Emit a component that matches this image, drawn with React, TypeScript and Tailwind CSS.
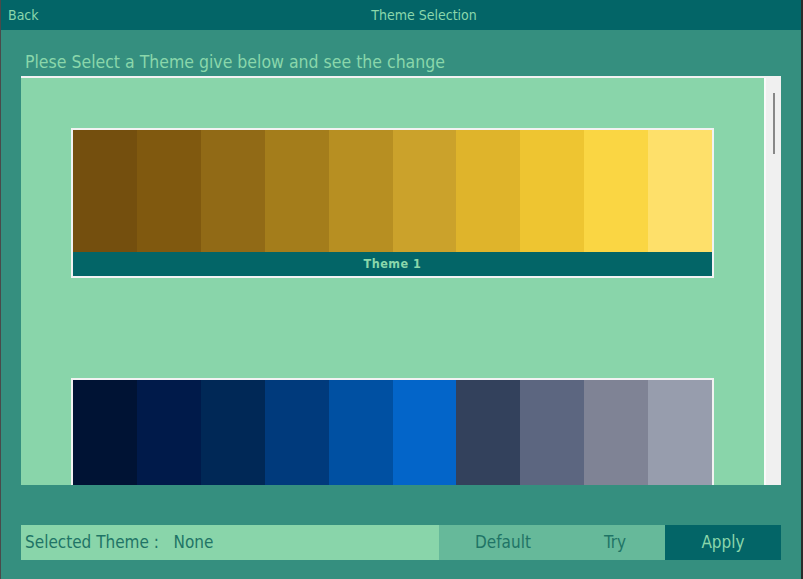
import React from "react";

const themes: { name: string; colors: string[] }[] = [
  {
    name: "Theme 1",
    colors: ["#744f0e", "#80590f", "#916a16", "#a47d1b", "#b78f22", "#cba22b", "#dfb42b", "#eec531", "#fad643", "#fee06a"],
  },
  {
    name: "Theme 2",
    colors: ["#001334", "#001a4a", "#002856", "#003a7c", "#0050a2", "#0365c9", "#33415c", "#5c6680", "#7f8395", "#979dad"],
  },
];

const font = { fontFamily: '"DejaVu Sans Condensed", "Liberation Sans Narrow", "Liberation Sans", sans-serif' };

export default function App() {
  return (
    <div
      className="w-[803px] h-[579px] bg-[#358f7f] border-l border-l-[#4a4a4a] border-r-2 border-r-[#2a2a2a] flex flex-col overflow-hidden"
      style={font}
    >
      <div className="h-[30px] bg-[#036567] flex items-center relative text-[#8ad7ab] text-[14px] shrink-0">
        <span className="pl-[7px]">Back</span>
        <span className="absolute left-0 right-0 text-center pl-[46px]">Theme Selection</span>
      </div>
      <div className="flex flex-col px-[20px]">
        <div className="h-[46px] flex items-end pb-[1px] pl-[4px] text-[#8ad7ab] text-[17.5px]">
          Plese Select a Theme give below and see the change
        </div>
        <div className="h-[409px] border-t-2 border-t-[#f2f2f2] bg-[#89d5aa] flex overflow-hidden">
          <div className="flex-1 flex flex-col gap-[100px] pt-[50px] px-[50px]">
            {themes.map((t) => (
              <div key={t.name} className="border-2 border-[#f2f2f2] h-[150px] flex flex-col shrink-0">
                <div className="flex h-[122px]">
                  {t.colors.map((c) => (
                    <div key={c} className="flex-1" style={{ backgroundColor: c }} />
                  ))}
                </div>
                <div className="h-[24px] bg-[#036567] text-[#8ad7ab] text-[12.5px] font-bold flex items-center justify-center tracking-[0.5px]">
                  {t.name}
                </div>
              </div>
            ))}
          </div>
          <div className="w-[17px] bg-[#f0f0f0] border-l-2 border-l-[#fafafa] flex justify-center pt-[15px] shrink-0">
            <div className="w-[2px] h-[61px] bg-[#888888]" />
          </div>
        </div>
        <div className="h-[40px]" />
        <div className="h-[35px] flex text-[17px]">
          <div className="w-[418px] bg-[#89d5aa] text-[#1f7466] flex items-center pl-[4px]">
            Selected Theme :&nbsp;&nbsp; None
          </div>
          <div className="w-[226px] bg-[#66b99a] text-[#1f7466] flex items-center">
            <span className="w-[128px] text-center">Default</span>
            <span className="w-[98px] text-center pr-[2px]">Try</span>
          </div>
          <div className="w-[116px] bg-[#036567] text-[#8ad7ab] flex items-center justify-center">Apply</div>
        </div>
      </div>
    </div>
  );
}
